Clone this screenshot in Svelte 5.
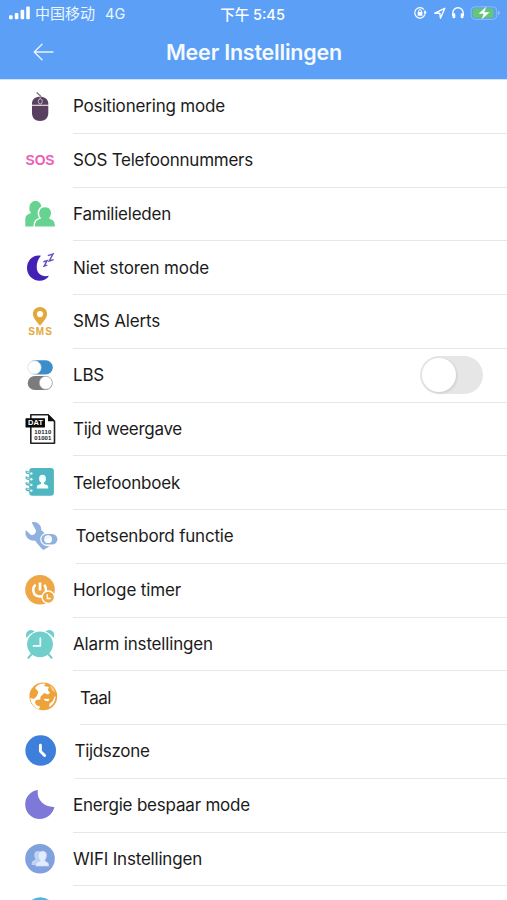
<script>
  let lbs = $state(false);
  const rows = [
    { id: 'mouse', label: 'Positionering mode', w: 152 },
    { id: 'sos', label: 'SOS Telefoonnummers', w: 180 },
    { id: 'family', label: 'Familieleden', w: 98 },
    { id: 'night', label: 'Niet storen mode', w: 136 },
    { id: 'sms', label: 'SMS Alerts', w: 87 },
    { id: 'lbs', label: 'LBS', w: 31, toggle: true },
    { id: 'dat', label: 'Tijd weergave', w: 109 },
    { id: 'book', label: 'Telefoonboek', w: 107 },
    { id: 'wrench', label: 'Toetsenbord functie', w: 158, indent: 2.5 },
    { id: 'timer', label: 'Horloge timer', w: 108 },
    { id: 'alarm', label: 'Alarm instellingen', w: 140 },
    { id: 'globe', label: 'Taal', w: 31, indent: 7 },
    { id: 'clock', label: 'Tijdszone', w: 75, indent: 1.5 },
    { id: 'moon', label: 'Energie bespaar mode', w: 177 },
    { id: 'wifi', label: 'WIFI Instellingen', w: 129 },
    { id: 'next', label: '', w: 0 }
  ];

  // Spread the difference between natural and intended width over the letters.
  function fit(node, width) {
    if (!width) return;
    const natural = node.getBoundingClientRect().width;
    node.style.letterSpacing = (width - natural) / node.textContent.length + 'px';
  }
</script>

<div class="screen">
  <header>
    <div class="status">
      <div class="carrier">
        <svg width="22" height="14" viewBox="0 0 22 14" fill="#fff">
          <rect x="0" y="9.3" width="3.6" height="4" rx="1" /><rect x="5.8" y="7" width="3.6" height="6.3" rx="1" />
          <rect x="11.6" y="3.8" width="3.6" height="9.5" rx="1" /><rect x="17.2" y="0.5" width="3.6" height="12.8" rx="1" />
        </svg>
        <span class="cn">中国移动</span><span class="net">4G</span>
      </div>
      <div class="time">下午 5:45</div>
      <div class="indicators">
        <svg width="88" height="18" viewBox="0 0 88 18" fill="none" stroke="#fff">
          <path d="M10.9 5.4A5.2 5.2 0 1 0 11.7 11" stroke-width="1.2" />
          <path d="M12 6.5v4" stroke-width="1.5" /><path d="M10.4 7.8h3.4L12.1 10z" fill="#fff" stroke="none" />
          <rect x="4.7" y="8" width="4.7" height="3.8" rx=".6" fill="#fff" stroke="none" /><path d="M5.7 8V7a1.35 1.35 0 0 1 2.7 0v1" />
          <path d="M21.8 9.2 31.8 4.3 27.5 14.2 26.8 9.3z" stroke-width="1.4" stroke-linejoin="round" />
          <path d="M39.8 12V9a5.2 5.2 0 0 1 10.4 0v3" stroke-width="1.4" />
          <rect x="39.5" y="9.3" width="2.8" height="5" rx="1.2" fill="#fff" stroke="none" /><rect x="47.7" y="9.3" width="2.8" height="5" rx="1.2" fill="#fff" stroke="none" />
          <rect x="58.2" y="2.8" width="25.5" height="12.6" rx="3.8" stroke="#8dbdf5" stroke-width="1" />
          <rect x="60" y="4.5" width="20.5" height="9.2" rx="2" fill="#62c871" stroke="none" />
          <path d="M85 7v4q1.7-.5 1.7-2T85 7z" fill="#9cc8f9" stroke="none" />
          <path d="M73.7 2 65.2 10h5.2L68 16.2 77 8h-5.3z" fill="#fff" stroke="#62b38f" stroke-width=".4" />
        </svg>
      </div>
    </div>
    <div class="nav">
      <button aria-label="Terug">
        <svg width="22" height="18" viewBox="0 0 22 18" fill="none" stroke="#e8f4ff" stroke-width="1.35" stroke-linecap="round" stroke-linejoin="round"><path d="M20 9H1.2M9 1.2 1.2 9 9 16.8" /></svg>
      </button>
      <h1><span use:fit={176}>Meer Instellingen</span></h1>
    </div>
  </header>

  <main>
    {#each rows as row}
      <div class="row">
        <svg class="icon" width="36" height="36" viewBox="0 0 36 36">
          {#if row.id === 'mouse'}
            <path d="M17.5 11c1-3.5-.3-3.5-1.7-4.5-1-.7-1-1.8-2.2-1.8" fill="none" stroke="#766a78" stroke-width="1.2" />
            <path d="M9 16.7v-1C9 11 12.3 8.7 17 8.7s8.3 2.3 8.3 7v1zM9 17.8h16.3V25c0 5-3.3 8-8.2 8S9 30 9 25z" fill="#58405e" />
            <path d="M17.2 8.5v8" stroke="#c5bac8" stroke-width=".8" /><ellipse cx="17.3" cy="13.4" rx="2" ry="2.6" fill="#58405e" stroke="#c5bac8" stroke-width="1" />
          {:else if row.id === 'sos'}
            <text x="2.5" y="23" textLength="29" class="sos">SOS</text>
          {:else if row.id === 'family'}
            <g fill="#66d391"><path d="M2.3 30.5v-7.2c0-3.6 2-4.7 6-6.2-2-2-2.3-4.4-1.8-6.7C7.1 7 9.7 5 12.5 5s5.4 2 5.8 5.2c.3 2.5-.2 4.8-1.7 6.6l1.2 2-7 11.7z" />
              <path d="M11.1 31.2c0-5.7 1.2-7.4 6-9.1-3.7-5.3-1-11.5 5-11.5s8.5 6 5 11.5c4.4 1.7 5.6 3.6 5.6 9.1z" stroke="#fff" stroke-width="1.5" /></g>
          {:else if row.id === 'night'}
            <path d="M17.9 6.8C9.7 5.3 4 11.8 4 19.1 4 26.4 9.6 31.8 16.5 31.8c4 0 7.5-1.9 9.5-5.1-7 1.8-12.1-2.2-12.3-8.2-.1-4.8 1.5-8.4 4.2-11.7z" fill="#4221b4" />
            <path d="M24.8 6.6 30 5 26.2 12 30.7 10.6M20.4 12.7l3.7-1-3 5.4 3.2-.9" fill="none" stroke="#6550c4" stroke-width="1.4" />
          {:else if row.id === 'sms'}
            <path fill-rule="evenodd" d="M17 4c-4.1 0-7.1 3-7.1 7 0 3.8 3.8 7.5 7.1 11.8 3.3-4.3 7.1-8 7.1-11.8 0-4-3-7-7.1-7zm0 4a3.1 3.1 0 1 1 0 6.2A3.1 3.1 0 0 1 17 8z" fill="#e3a83a" />
            <text x="5.2" y="31.8" textLength="23.6" class="sms">SMS</text>
          {:else if row.id === 'lbs'}
            <rect x="5" y="3.3" width="24.8" height="14.2" rx="7.1" fill="#3d8dcb" /><circle cx="11.4" cy="10.4" r="6.7" fill="#fff" stroke="#d8dfe5" stroke-width=".7" />
            <rect x="4.7" y="18.9" width="24.8" height="14.2" rx="7.1" fill="#7b7b7b" /><circle cx="22.8" cy="25.8" r="6.5" fill="#fff" stroke="#aaa" stroke-width=".7" />
          {:else if row.id === 'dat'}
            <path d="M7.8 17V3.8H25l6.5 6.5V32.2H7.8z" fill="#fff" stroke="#222" stroke-width="1.6" stroke-linejoin="round" /><path d="M25 3v7.3h7z" fill="#111" />
            <rect x="2.5" y="7.2" width="19.5" height="9.2" rx=".6" fill="#080808" />
            <text x="5" y="14.4" textLength="15" class="dat">DAT</text>
            <text x="11.2" y="23" textLength="17.2" class="bits">10110</text><text x="11.2" y="29.1" textLength="17.2" class="bits">01001</text>
          {:else if row.id === 'book'}
            <rect x="6.2" y="4" width="24.7" height="27.8" rx="3" fill="#50b7c2" />
            {#each [8.3, 14, 19.7, 25.4] as y}
              <path d="M3.3 {y - 1.2}c-.8 1.8.6 2.5 3 2.5" fill="none" stroke="#50b7c2" stroke-width="1.4" /><circle cx="8.3" cy={y + 1.2} r="1.2" fill="#fff" /><path d="M2.9 {y - 1.2}l5.3 1.4" stroke="#79c7cf" stroke-width="1.2" />
            {/each}
            <ellipse cx="19.5" cy="14.7" rx="3.4" ry="4" fill="#f4ffff" /><path d="M18 17h3v3c2 .7 4.2 1 4.2 2.9v1.5H13.8v-1.5c0-1.9 2.2-2.2 4.2-2.9z" fill="#f4ffff" />
          {:else if row.id === 'wrench'}
            <path d="M8.7 4.5c2.1-.8 5-.4 7.1 1.4 2 1.8 2.7 4 2.4 6.2l6.8 6.2-5.6 13.2-7.1-8.7C8 23 4.4 21.3 3 17.7c-.8-2-.8-4 0-5.5l5 4.7c2.7.4 5.2-1.6 5-4.5z" fill="#8fb1df" />
            <path d="M13 24c5 0 8 5 14 4l-6.6 4z" fill="#8fb1df" />
            <rect x="17.2" y="14.8" width="17.7" height="12.8" rx="6.4" fill="#fff" /><rect x="18.4" y="16" width="16" height="10.4" rx="5.2" fill="#8fb1df" /><circle cx="25.1" cy="21.2" r="3.9" fill="#fff" /><path d="M22.8 21.2a2.4 2.4 0 0 1 4-1.7" stroke="#c7d8ef" stroke-width=".7" fill="none" />
          {:else if row.id === 'timer'}
            <circle cx="17" cy="17.8" r="14.8" fill="#efa746" /><path d="M17 10.5v8" stroke="#fff" stroke-width="2.7" />
            <path d="M12.7 12.7c-4 3-3.3 11.8 4.4 11.8 5.7 0 7.4-7.2 4.2-11.8" fill="none" stroke="#fff" stroke-width="2.5" />
            <circle cx="25.3" cy="25.2" r="6.2" fill="#efa746" stroke="#fff" stroke-width="1.3" /><path d="M24.2 22.2v4.3h3.6" fill="none" stroke="#fff" stroke-width="1.3" />
          {:else if row.id === 'alarm'}
            <g fill="#70cfca"><circle cx="17" cy="18.3" r="12.9" /><path d="M3.8 12.1C1.6 8.3 4.3 4 8 4c1.6 0 2.8.7 3.6 1.8-3.4 1-6.4 3.4-7.8 6.3zM30.4 12.1C32.7 8.3 30 4 26.2 4c-1.6 0-2.8.7-3.6 1.8 3.4 1 6.3 3.4 7.8 6.3z" /></g>
            <path d="m8.7 28-3.3 3.8M25.3 28l3.3 3.8" stroke="#70cfca" stroke-width="2.1" stroke-linecap="round" /><path d="M17.3 12.2v7.7h-6.8" fill="none" stroke="#f5ffff" stroke-width="1.7" stroke-linecap="round" />
          {:else if row.id === 'globe'}
            <circle cx="20.3" cy="17.4" r="13.9" fill="#eda23a" />
            <path d="M12 9c3-4 7-5 10.5-4.2L21 7l5 1-1.2 3.1 2.4 3-2.3 1.3-3.7-1.4-3.6 3.4-.4 3-4.3.5-1 2.5 1.8 3 3.2.8-.8 3c-5-1.5-8.7-6.5-8.7-11.5l3.5 1.2 3-3 1.5-4.2z" fill="#fff" />
            <path d="m20.5 19.7 6 .3-1.3 2.5-3.4-1zM31.5 17.7l1-.4c0 5-2.5 9-6.5 10.8l.5-3.3 3.5-3z" fill="#fff" /><path d="M26.5 6.2c3 1.2 5 3.8 6 7.2l-3.4-2.2z" fill="#f6cf95" />
          {:else if row.id === 'clock'}
            <circle cx="17.7" cy="17.5" r="15.3" fill="#3f7fdc" /><path d="M17.4 12.3v6l4.2 4.2" fill="none" stroke="#fff" stroke-width="2.9" stroke-linecap="round" stroke-linejoin="round" />
          {:else if row.id === 'moon'}
            <path d="M14.8 3.1C7.7 3.8 2.2 10 2.2 17.5 2.2 25.7 8.7 32 16.8 32c7.2 0 13.1-5.2 14.6-12-9.5.4-18-6.4-16.6-16.9z" fill="#7e78d8" />
          {:else if row.id === 'wifi'}
            <defs><linearGradient id="blue" x2="0" y2="1"><stop stop-color="#7ea3dc" /><stop offset="1" stop-color="#819fe1" /></linearGradient></defs>
            <circle cx="17" cy="17.8" r="14.8" fill="url(#blue)" />
            <path d="M8.7 24v-1.9c0-1.6 1.5-2.3 3.8-3.5-3.6-7.7 1.4-9.7 4.6-8.2v9L14 24z" fill="#bfd3f4" />
            <path d="M12.8 25.2c0-4 2-4 4.5-5.5-4-5.5-1.6-9.8 2.2-9.8 4 0 6 4.2 2.3 9.8 2.5 1.5 4.2 1.8 4.2 5.5z" fill="#e2ecff" stroke="#a9c0ea" stroke-width=".4" />
          {:else}
            <circle cx="17.3" cy="18" r="14.8" fill="#51b4df" />
          {/if}
        </svg>
        <div class="body" style:margin-left="{14 + (row.indent ?? 0)}px">
          <span class="label" use:fit={row.w}>{row.label}</span>
          {#if row.toggle}
            <button class="switch" class:on={lbs} role="switch" aria-checked={lbs} aria-label="LBS" onclick={() => (lbs = !lbs)}><i></i></button>
          {/if}
        </div>
      </div>
    {/each}
  </main>
</div>

<style>
  :global(body) { margin: 0; background: #fff; overflow: hidden; }
  .screen { width: 507px; height: 900px; overflow: hidden; background: #fff; font-family: Inter, "Noto Sans CJK SC", sans-serif; }
  header { height: 80px; background: #5b9ff6; color: #fff; border-bottom: 1px solid #c9e4fb; box-sizing: border-box; }
  .status { height: 26px; display: grid; grid-template-columns: 1fr auto 1fr; align-items: center; padding: 0 6px 0 9px; }
  .carrier { display: flex; align-items: center; }
  .cn { font: 15px/20px "Noto Sans CJK SC", sans-serif; margin-left: 4px; color: #edf6ff; }
  .net { font-size: 14.5px; margin-left: 10px; color: #edf6ff; }
  .time { font-size: 14.5px; font-weight: 500; white-space: nowrap; padding-right: 5px; }
  .indicators { display: flex; justify-content: flex-end; }
  .nav { height: 51px; display: grid; grid-template-columns: 80px 1fr 80px; align-items: center; }
  button { border: 0; padding: 0; background: none; }
  .nav button { display: flex; padding-left: 33px; }
  h1 { margin: 0; padding-left: 1px; text-align: center; font-size: 21.5px; font-weight: 600; line-height: 28px; white-space: nowrap; color: #f5faff; }
  .row { height: 53.75px; display: flex; padding-left: 23px; box-sizing: border-box; }
  .icon { flex: none; margin-top: 8px; }
  .body { flex: 1; height: 100%; display: flex; align-items: center; justify-content: space-between; padding-right: 24px; border-bottom: 1px solid #e7e7e7; box-sizing: border-box; }
  .label { font-size: 17px; line-height: 24px; color: #1b1b1b; white-space: nowrap; }
  .switch { width: 63px; height: 38px; border-radius: 19px; background: #e6e6e6; display: flex; align-items: center; padding: 2px; box-sizing: border-box; }
  .switch i { width: 34px; height: 34px; border-radius: 50%; background: #fff; box-shadow: 1px 1px 3px rgba(0, 0, 0, 0.12); }
  .switch.on { background: #5b9ff6; justify-content: flex-end; }
  text { font-family: "Liberation Sans", sans-serif; font-weight: bold; }
  .sos { font-size: 13.8px; fill: #eb5fb7; }
  .sms { font-size: 10px; fill: #e3a83a; }
  .dat { font-size: 7.5px; fill: #fff; }
  .bits { font-size: 6px; fill: #222; }
</style>
